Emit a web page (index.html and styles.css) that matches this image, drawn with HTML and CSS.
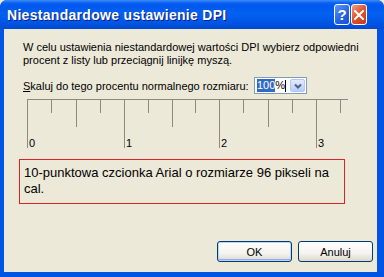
FILE: index.html
```html
<!DOCTYPE html>
<html lang="pl">
<head>
    <meta charset="UTF-8">
    <title>Niestandardowe ustawienie DPI</title>
    <link rel="stylesheet" href="styles.css">
</head>
<body>
    <div class="window">
        <div class="title-bar">
            <div class="title">Niestandardowe ustawienie DPI</div>
            <div class="title-buttons">
                <div class="tb-btn help">?</div>
                <div class="tb-btn close">
                    <svg width="10" height="10" viewBox="0 0 10 10">
                        <path d="M1 1 L9 9 M9 1 L1 9" stroke="#fff" stroke-width="2" stroke-linecap="square"/>
                    </svg>
                </div>
            </div>
        </div>

        <div class="content">
            <p class="intro">W celu ustawienia niestandardowej wartości DPI wybierz odpowiedni procent z listy lub przeciągnij linijkę myszą.</p>

            <div class="scale-row">
                <label class="scale-label"><u>S</u>kaluj do tego procentu normalnego rozmiaru:</label>
                <div class="combo">
                    <div class="combo-field"><span class="sel">100</span>%<span class="caret"></span></div>
                    <div class="combo-btn">
                        <svg width="8" height="6" viewBox="0 0 8 6">
                            <path d="M1 1.5 L4 4.5 L7 1.5" fill="none" stroke="#4d6185" stroke-width="2"/>
                        </svg>
                    </div>
                </div>
            </div>

            <svg class="ruler" width="324" height="54" viewBox="0 0 324 54">
                <g stroke="#8c8a80" stroke-width="1">
                    <line x1="0" y1="1.5" x2="321" y2="1.5"/>
                    <line x1="0.5" y1="1" x2="0.5" y2="50"/>
                    <line x1="24.5" y1="1" x2="24.5" y2="15"/>
                    <line x1="49.5" y1="1" x2="49.5" y2="29"/>
                    <line x1="73.5" y1="1" x2="73.5" y2="15"/>
                    <line x1="97.5" y1="1" x2="97.5" y2="50"/>
                    <line x1="121.5" y1="1" x2="121.5" y2="15"/>
                    <line x1="145.5" y1="1" x2="145.5" y2="29"/>
                    <line x1="168.5" y1="1" x2="168.5" y2="15"/>
                    <line x1="192.5" y1="1" x2="192.5" y2="50"/>
                    <line x1="216.5" y1="1" x2="216.5" y2="15"/>
                    <line x1="241.5" y1="1" x2="241.5" y2="29"/>
                    <line x1="265.5" y1="1" x2="265.5" y2="15"/>
                    <line x1="289.5" y1="1" x2="289.5" y2="50"/>
                    <line x1="313.5" y1="1" x2="313.5" y2="15"/>
                </g>
                <g class="ruler-num">
                    <text x="2" y="49">0</text>
                    <text x="99" y="49">1</text>
                    <text x="194" y="49">2</text>
                    <text x="291" y="49">3</text>
                </g>
            </svg>

            <div class="sample">10-punktowa czcionka Arial o rozmiarze 96 pikseli na cal.</div>

            <div class="buttons">
                <button class="btn default">OK</button>
                <button class="btn">Anuluj</button>
            </div>
        </div>
    </div>
</body>
</html>
```

FILE: styles.css
```css
* {
    margin: 0;
    padding: 0;
    box-sizing: border-box;
}

body {
    background-color: #ece9d8;
    font-family: "Liberation Sans", Arial, sans-serif;
    font-size: 11px;
    color: #000;
}

.window {
    width: 384px;
    height: 277px;
    display: flex;
    flex-direction: column;
    background-color: #0055e5;
    border-radius: 7px 7px 0 0;
    overflow: hidden;
}

.title-bar {
    height: 29px;
    display: flex;
    justify-content: space-between;
    align-items: flex-start;
    padding: 4px 17px 0 7px;
    background: linear-gradient(to bottom, #3d8ef8 0, #0a5ff0 3px, #0058ee 6px, #0461f0 45%, #0055e5 80%, #0148d0 100%);
}

.title {
    font-weight: bold;
    font-size: 14px;
    letter-spacing: 0.3px;
    color: #fff;
    line-height: 22px;
    text-shadow: 1px 1px 0 #0a1e80;
}

.title-buttons {
    display: flex;
    gap: 1px;
}

.tb-btn {
    width: 16px;
    height: 21px;
    border: 1px solid #fff;
    border-radius: 3px;
    display: flex;
    justify-content: center;
    align-items: center;
}

.help {
    background: linear-gradient(135deg, #5d97fb, #2462e2 60%, #1c50d0);
    color: #fff;
    font-weight: bold;
    font-size: 15px;
}

.close {
    background: linear-gradient(135deg, #f0a28a, #e2562c 45%, #c8381a);
}

.content {
    flex: 1;
    margin: 0 7px 5px 4px;
    background-color: #ece9d8;
    padding: 12px 0 0 15px;
    display: flex;
    flex-direction: column;
}

.intro {
    padding-left: 4px;
    line-height: 13px;
    width: 340px;
}

.scale-row {
    display: flex;
    align-items: center;
    margin-top: 10px;
    padding-left: 4px;
}

.scale-label {
    width: 231px;
}

.combo {
    display: flex;
    width: 53px;
    height: 17px;
    border: 1px solid #7f9db9;
    background-color: #fff;
    padding: 1px;
}

.combo-field {
    flex: 1;
    display: flex;
    align-items: center;
    line-height: 13px;
    padding-left: 1px;
}

.sel {
    background-color: #316ac5;
    color: #fff;
}

.caret {
    width: 1px;
    height: 12px;
    background-color: #000;
}

.combo-btn {
    width: 15px;
    height: 13px;
    border-radius: 2px;
    background: linear-gradient(to bottom, #e2ebfd, #b9cdf8);
    border: 1px solid #b4c8f6;
    display: flex;
    justify-content: center;
    align-items: center;
}

.ruler {
    display: block;
    margin: 4px 0 0 8px;
}

.ruler-num {
    font-size: 11px;
    fill: #000;
}

.sample {
    margin-top: 7px;
    width: 326px;
    height: 45px;
    border: 1px solid #d82428;
    padding: 5px 4px;
    font-size: 13px;
    line-height: 16px;
}

.buttons {
    display: flex;
    justify-content: flex-end;
    gap: 6px;
    margin-top: auto;
    margin-bottom: 10px;
    padding-right: 4px;
}

.btn {
    width: 75px;
    height: 21px;
    border: 1px solid #003c74;
    border-radius: 3px;
    background: linear-gradient(to bottom, #fff 0, #f4f3ee 60%, #dcd8c9 100%);
    font-family: "Liberation Sans", Arial, sans-serif;
    font-size: 11px;
    color: #000;
}

.btn.default {
    box-shadow: inset 0 0 0 1px #bcd4f6, inset 0 -1px 0 1px #89adf0;
}
```
